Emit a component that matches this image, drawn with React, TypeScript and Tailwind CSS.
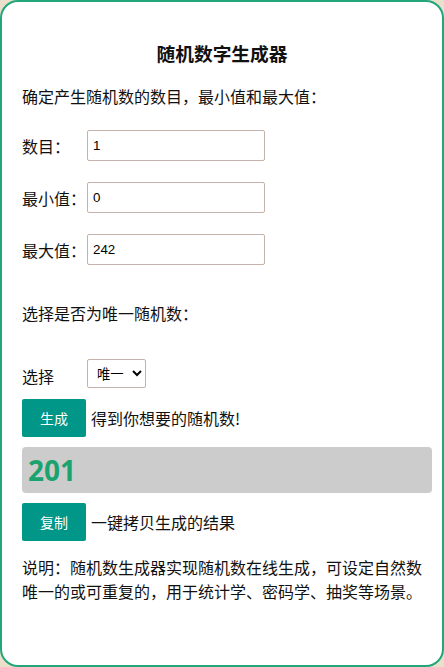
import React from 'react'

const cjk = "font-['Microsoft_YaHei','Noto_Sans_CJK_SC',sans-serif]"

const Field: React.FC<{ label: string; value: string }> = ({ label, value }) => (
  <div className="flex items-center h-[31px]">
    <span className="w-[65px] text-[16px] leading-6">{label}</span>
    <input
      defaultValue={value}
      className="w-[178px] h-[31px] border border-[#c4b3aa] rounded-[2px] px-[5px] text-[13.33px] font-['Liberation_Sans',Arial,sans-serif] text-black outline-none"
    />
  </div>
)

export default function App() {
  return (
    <div className={`w-[444px] h-[667px] bg-[#e9dfcb] text-[#111] ${cjk}`}>
      <div className="h-[667px] border-2 border-[#22a67a] rounded-[18px] bg-white pl-5 pr-[10px] pt-[39px]">
        <h3 className="-ml-5 -mr-[10px] text-center text-[18.72px] font-bold leading-6">随机数字生成器</h3>
        <p className="mt-[19px] text-[16px] leading-6">确定产生随机数的数目，最小值和最大值：</p>

        <div className="mt-[22px] flex flex-col gap-[21px]">
          <Field label="数目：" value="1" />
          <Field label="最小值：" value="0" />
          <Field label="最大值：" value="242" />
        </div>

        <p className="mt-[36px] text-[16px] leading-6">选择是否为唯一随机数：</p>

        <div className="mt-[34px] flex items-center h-[29px]">
          <span className="w-[65px] text-[16px] leading-6 pt-[5px]">选择</span>
          <select
            defaultValue="1"
            className="w-[59px] h-[29px] border border-[#c4b3aa] rounded-[2px] bg-white pl-[5px] text-[13.33px] text-black outline-none"
          >
            <option value="1">唯一</option>
            <option value="0">可重复</option>
          </select>
        </div>

        <div className="mt-[11px] flex items-center gap-[5px]">
          <button className="w-[64px] h-[38px] rounded-[2px] bg-[#009688] text-white text-[14px]">生成</button>
          <span className="text-[16px] leading-6">得到你想要的随机数!</span>
        </div>

        <div className="mt-[10px] h-[46px] rounded-[4px] bg-[#cccccc] pl-[6px] flex items-center">
          <span className="font-['Open_Sans',sans-serif] font-bold text-[28px] leading-none text-[#1ba36f]">201</span>
        </div>

        <div className="mt-[10px] flex items-center gap-[5px]">
          <button className="w-[64px] h-[38px] rounded-[2px] bg-[#009688] text-white text-[14px]">复制</button>
          <span className="text-[16px] leading-6">一键拷贝生成的结果</span>
        </div>

        <p className="mt-[14px] text-[16px] leading-6">
          说明：随机数生成器实现随机数在线生成，可设定自然数唯一的或可重复的，用于统计学、密码学、抽奖等场景。
        </p>
      </div>
    </div>
  )
}
